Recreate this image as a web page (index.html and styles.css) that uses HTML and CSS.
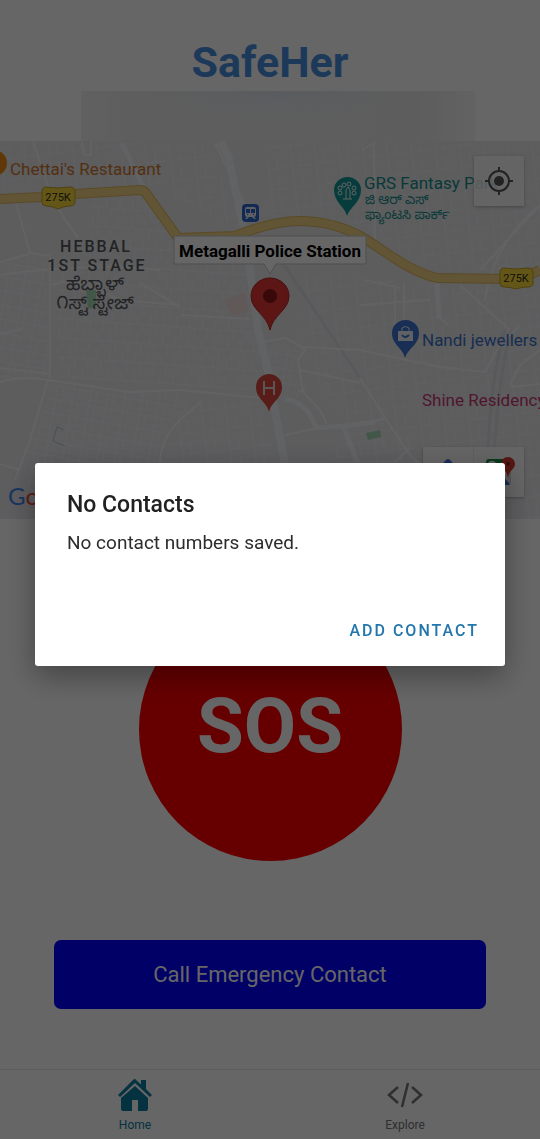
FILE: index.html
```html
<!DOCTYPE html>
<html lang="en">
<head>
<meta charset="utf-8">
<meta name="viewport" content="width=device-width, initial-scale=1">
<title>SafeHer</title>
<link rel="stylesheet" href="styles.css">
</head>
<body>
<div class="app">
  <header class="header">
    <h1 class="brand">SafeHer</h1>
    <div class="location"></div>
  </header>

  <section class="map" aria-label="Map">
    <svg class="map-canvas" viewBox="0 141 540 378" preserveAspectRatio="xMidYMid slice">
      <defs>
        <pattern id="blocks-a" width="13" height="19" patternUnits="userSpaceOnUse" patternTransform="rotate(4)">
          <path class="lane" d="M0 0H13M0 10H13M4 0V10M9 10V19"/>
        </pattern>
        <pattern id="blocks-b" width="17" height="14" patternUnits="userSpaceOnUse" patternTransform="rotate(10)">
          <path class="lane" d="M0 0H17M0 6H17M5 0V14M11 6V14"/>
        </pattern>
        <pattern id="blocks-c" width="24" height="21" patternUnits="userSpaceOnUse" patternTransform="rotate(-7)">
          <path class="lane" d="M0 0H24M6 0V21M15 0V12M6 12H24"/>
        </pattern>
      </defs>
      <rect class="ground" y="141" width="540" height="378"/>
      <path fill="url(#blocks-a)" d="M88 200L140 196L178 240L245 270L262 335L262 390L180 388L60 378L50 260L85 250Z"/>
      <path fill="url(#blocks-b)" d="M0 262L45 255L50 376L0 380Z M52 384L180 394L166 440L150 519H25L32 440Z M262 345L300 350L298 398L270 395Z"/>
      <path fill="url(#blocks-c)" d="M0 143H210L240 230L150 185L0 190Z M270 143H540V270H440L360 230L260 215Z M300 270L430 285L540 290V519H300L345 430L300 350Z M180 400L262 402L275 463H165Z"/>
      <path class="patch-green" d="M86 290H96V307L88 309Z M366 433L380 430L381 437L368 440Z"/>
      <path class="patch-pink" d="M224 300L245 292L248 312L232 316Z"/>
      <path class="patch-line" d="M64 430L57 427L53 441L65 446"/>
      <path class="rail" d="M505 330Q487 385 486 519M512 330Q494 385 492 519M284 265L360 378"/>
      <path class="street" d="M33 141L47 183L57 207L78 238M15 200L30 253L50 256V378M0 262L30 254M82 142L84 155H91V141M50 285L75 280L120 300L180 305M140 283L180 307M0 382C20 376 35 378 48 380L130 392L180 390L262 398M48 380L30 440L15 480M0 464L20 470M0 334L22 329M0 368L50 374M180 420Q160 440 160 463M180 420L202 401M0 275Q90 262 160 270M181 315L250 319M262 342L285 338Q300 345 305 350L298 360L303 392L320 410L327 424M298 392L305 389M300 370L360 383M303 347L360 350L440 367L485 372L500 345L520 325M285 435L317 428M360 378L385 418L410 455L420 465M360 425L386 418M395 462L410 448M510 385L520 365L540 350M510 387L540 384M362 150L374 143L375 240M215 143L245 205M365 280L400 288M438 284L440 318L448 325M480 270L540 205M485 300Q495 240 540 205M395 285V330M404 285V328M360 305L430 300M460 285L510 330"/>
      <path class="road" d="M122 143L143 187M285 399Q300 401 308 412L317 428L343 426L375 422M343 426L358 463M437 283L439 318"/>
      <path class="road-main" d="M220 141L228 155L243 225L250 270L258 330L268 372L273 400L285 465"/>
      <path class="highway-edge" d="M0 199L42 197L75 194L140 190Q145 190 148 196L178 238L235 236C265 224 285 221 300 221C325 221 345 228 360 236C385 250 405 270 437 278L520 279L540 270"/>
      <path class="highway" d="M0 199L42 197L75 194L140 190Q145 190 148 196L178 238L235 236C265 224 285 221 300 221C325 221 345 228 360 236C385 250 405 270 437 278L520 279L540 270"/>

      <g class="shield">
        <path d="M46 187Q58 189 70 187Q75 187 75 192V202Q75 206 70 206Q64 206 58 209Q52 206 46 206Q42 206 42 202V192Q42 187 46 187Z"/>
        <text x="58" y="201">275K</text>
        <path d="M504 268Q516 270 528 268Q533 268 533 273V283Q533 287 528 287Q522 287 516 289Q510 287 504 287Q500 287 500 283V273Q500 268 504 268Z"/>
        <text x="516" y="282">275K</text>
      </g>

      <circle class="food" cx="-6" cy="163" r="13"/>
      <text class="poi poi-food" x="10" y="175">Chettai's Restaurant</text>

      <g class="district">
        <text x="96" y="252">HEBBAL</text>
        <text x="97" y="271">1ST STAGE</text>
        <text class="kannada" x="95" y="290">ಹೆಬ್ಬಾಳ್</text>
        <text class="kannada" x="95" y="309">೧ಸ್ಟ್ ಸ್ಟೇಜ್</text>
      </g>

      <rect class="station" x="242" y="204" width="17" height="18" rx="4"/>
      <path class="station-train" d="M247 207H254Q256 207 256 209V215Q256 217 254 217H247Q245 217 245 215V209Q245 207 247 207ZM247 217L245 219H247L249 217ZM252 217L254 219H256L254 217Z"/>
      <path class="station-window" d="M246 209H250V213H246ZM251 209H255V213H251ZM247 214H248V215H247ZM253 214H254V215H253Z"/>

      <path class="pin-park" d="M347 216C345 207 334 202 334 190A13.500 13 0 0 1 361 190C361 202 350 207 347 216Z"/>
      <g class="pin-line">
        <circle cx="340" cy="193" r="2"/><circle cx="340" cy="188" r="2"/><circle cx="344" cy="185" r="2"/><circle cx="349" cy="184" r="2"/><circle cx="354" cy="188" r="2"/><circle cx="354" cy="193" r="2"/>
        <path d="M343 199H352M346 199V190L348 187L350 190V199"/>
      </g>
      <text class="poi poi-park" x="364" y="189">GRS Fantasy Park</text>
      <text class="poi-small poi-park" x="365" y="204">ಜಿ ಆರ್ ಎಸ್</text>
      <text class="poi-small poi-park" x="365" y="219">ಫ್ಯಾಂಟಸಿ ಪಾರ್ಕ್</text>

      <path class="pin-shop" d="M405 358C403 348 392 345 392 333A13.500 13 0 0 1 419 333C419 345 408 348 405 358Z"/>
      <path class="pin-bag" d="M398 331H413V341H398Z"/>
      <path class="pin-line" d="M402 331V328Q405 325 409 328V331"/>
      <path class="pin-smile" d="M402 335Q405 339 409 335"/>
      <text class="poi poi-shop" x="422" y="346">Nandi jewellers</text>
      <text class="poi poi-hotel" x="422" y="406">Shine Residency</text>

      <path class="pin-hospital" d="M269 412C267 402 256 399 256 387A13 13 0 0 1 282 387C282 399 271 402 269 412Z"/>
      <path class="pin-h" d="M264 381V395M274 381V395M264 388H274"/>

      <path class="pin-main" d="M270 330C267 315 251 310 251 296A19 18 0 0 1 289 296C289 310 273 315 270 330Z"/>
      <circle class="pin-dot" cx="270" cy="296" r="7"/>

      <path class="callout" d="M174 236H366V264H276L270 274L264 264H174Z"/>
      <text class="callout-text" x="270" y="257">Metagalli Police Station</text>

      <text class="logo" x="8" y="505"><tspan class="blue">G</tspan><tspan class="red">o</tspan></text>
    </svg>

    <button class="map-button locate" type="button" aria-label="My location">
      <svg viewBox="0 0 30 30" width="30" height="30" fill="none" stroke="#555" stroke-width="2"><circle cx="15" cy="15" r="10"/><circle cx="15" cy="15" r="5" fill="#555" stroke="none"/><path d="M15 1V6M15 24V29M1 15H6M24 15H29"/></svg>
    </button>
    <div class="map-links">
      <button class="map-button" type="button" aria-label="Directions">
        <svg viewBox="0 0 30 30" width="30" height="30"><path fill="#4272db" d="M13.500 2.500Q15 1.500 16.500 2.500L27.500 13.500Q28.500 15 27.500 16.500L16.500 27.500Q15 28.500 13.500 27.500L2.500 16.500Q1.500 15 2.500 13.500Z"/><path fill="none" stroke="#fff" stroke-width="2" d="M11 19V14H19M16 11L19 14L16 17"/></svg>
      </button>
      <button class="map-button" type="button" aria-label="Open in Maps">
        <svg viewBox="0 0 32 32" width="32" height="32"><path fill="#188c48" d="M3 6Q3 3 6 3H24L16 16L3 27Z"/><path fill="#fff" d="M18 17L25 12V27Z"/><path fill="#3f6cd0" d="M10 28L18 18L27 28Z"/><path fill="#d7d7d7" d="M20 20L28 14V28Z"/><path fill="#3f6cd0" d="M21 22L27 29H21Z"/><path fill="none" stroke="#eee" stroke-width="2" d="M12 7A4 4 0 1 0 13 10H9"/><path fill="#d63a2e" d="M25 22C24 14 18 13 18 8A7 7 0 0 1 32 8C32 13 26 14 25 22Z"/><circle fill="#8b1c16" cx="25" cy="8" r="2"/></svg>
      </button>
    </div>
  </section>

  <main class="actions">
    <button class="sos" type="button">SOS</button>
    <button class="call" type="button">Call Emergency Contact</button>
  </main>

  <nav class="tabs">
    <a class="tab active" href="#home">
      <svg viewBox="0 0 36 34" width="36" height="34" fill="currentColor"><path d="M18 1L24 6.500V2H29V11L35 17L33 19L18 5L3 19L1 17L16 2Q18 0 20 2Z"/><path d="M18 8L31 20V31Q31 33 29 33H21V22H15V33H6Q4 33 4 31V20Z"/></svg>
      <span>Home</span>
    </a>
    <a class="tab" href="#explore">
      <svg viewBox="0 0 36 34" width="36" height="34" fill="none" stroke="currentColor" stroke-width="2.500"><path d="M11 9L2 17L11 25M25 9L34 17L25 25M21 5L15 29"/></svg>
      <span>Explore</span>
    </a>
  </nav>
</div>

<div class="scrim">
  <section class="dialog" role="alertdialog" aria-modal="true" aria-labelledby="dialog-title" aria-describedby="dialog-text">
    <h2 class="dialog-title" id="dialog-title">No Contacts</h2>
    <p class="dialog-text" id="dialog-text">No contact numbers saved.</p>
    <div class="dialog-actions"><button class="dialog-button" type="button">Add Contact</button></div>
  </section>
</div>
</body>
</html>
```
FILE: styles.css
```css
* { box-sizing: border-box; }
body {
  margin: 0;
  background: #fff;
  font-family: Roboto, "Noto Sans Kannada", "Noto Sans", sans-serif;
}
button { border: 0; padding: 0; font-family: inherit; cursor: pointer; }

.app { display: flex; flex-direction: column; min-height: 100vh; }

.header { display: flex; flex-direction: column; padding-top: 34px; }
.brand { margin: 0; text-align: center; font-size: 43px; line-height: 57px; font-weight: 700; color: #4a90e2; }
.location {
  width: 73%;
  height: 50px;
  margin-left: 15%;
  background:
    radial-gradient(ellipse at 50% 0, rgba(215, 226, 238, .6), transparent 45%),
    linear-gradient(90deg, #f2f2f2, #eaeaea 15%, #ececec 50%, #e8e8e8 85%, #f6f6f6);
}

.map { position: relative; height: 378px; overflow: hidden; }
.map-canvas { display: block; width: 100%; height: 100%; }
.ground { fill: #e8e8ec; }
.lane { fill: none; stroke: #f1f2f5; stroke-width: 1; }
.street { fill: none; stroke: #f5f6f8; stroke-width: 2; }
.road { fill: none; stroke: #f3f4f7; stroke-width: 5; }
.road-main { fill: none; stroke: #f3f4f7; stroke-width: 8; }
.rail { fill: none; stroke: #dddfe3; stroke-width: 3; }
.highway-edge { fill: none; stroke: #dfb95e; stroke-width: 10; }
.highway { fill: none; stroke: #f5d585; stroke-width: 8; }
.patch-green { fill: #a9d9b4; }
.patch-pink { fill: #efdfdd; }
.patch-line { fill: none; stroke: #b5c4ce; stroke-width: 1; }

.shield path { fill: #f7d73a; stroke: #c2a32a; stroke-width: 1; }
.shield text { font-size: 11px; fill: #2d2d18; text-anchor: middle; }
.poi { font-size: 17px; }
.poi-small { font-size: 13px; }
.poi-food { fill: #d0762c; }
.poi-park { fill: #14908d; }
.poi-shop { fill: #3a72c8; }
.poi-hotel { fill: #c83870; }
.food { fill: #f08c14; }
.district text { font-size: 16px; letter-spacing: 2px; fill: #55585c; text-anchor: middle; font-weight: 500; }
.district .kannada { font-size: 18px; letter-spacing: 0; font-weight: 400; }
.station { fill: #2c68cf; }
.station-train { fill: #e7eefa; }
.station-window { fill: #2c68cf; }
.pin-park { fill: #109896; }
.pin-shop { fill: #3d73d4; }
.pin-line { fill: none; stroke: #eef6f6; stroke-width: 1; }
.pin-bag { fill: #eef3fb; }
.pin-smile { fill: none; stroke: #3d73d4; stroke-width: 2; }
.pin-hospital { fill: #dd4a40; }
.pin-h { fill: none; stroke: #e8d4d4; stroke-width: 2; }
.pin-main { fill: #e53935; stroke: #b82622; stroke-width: 1; }
.pin-dot { fill: #8e1616; }
.callout { fill: #fff; stroke: #c4c4c4; stroke-width: 1; }
.callout-text { font-size: 17px; font-weight: 700; fill: #000; text-anchor: middle; }
.logo { font-family: Lato, sans-serif; font-size: 24px; }
.blue { fill: #4285f4; }
.red { fill: #ea4335; }

.map-button { display: grid; place-items: center; width: 50px; height: 50px; background: rgba(255, 255, 255, .8); }
.locate { position: absolute; top: 15px; right: 16px; box-shadow: 0 1px 3px #aaa; }
.map-links { position: absolute; right: 16px; bottom: 22px; display: flex; gap: 1px; box-shadow: 0 1px 3px #aaa; }

.actions { flex: 1; display: flex; flex-direction: column; align-items: center; gap: 79px; padding: 79px 10% 60px; }
.sos {
  width: 263px;
  height: 263px;
  padding-bottom: 8px;
  border-radius: 50%;
  background: #f00;
  color: #fff;
  font-size: 76px;
  font-weight: 700;
}
.call { width: 100%; height: 69px; border-radius: 7px; background: #00f; color: #fff; font-size: 22px; }

.tabs { display: flex; height: 71px; border-top: 1px solid #e6e6e6; }
.tab {
  flex: 1;
  display: flex;
  flex-direction: column;
  align-items: center;
  gap: 5px;
  padding-top: 8px;
  color: #757575;
  font-size: 12px;
  line-height: 16px;
  text-decoration: none;
}
.tab.active { color: #0a7ea4; }

.scrim {
  position: fixed;
  inset: 0;
  display: grid;
  align-items: center;
  padding: 0 35px 10px;
  background: rgba(0, 0, 0, .6);
}
.dialog {
  padding: 28px 20px 16px 32px;
  border-radius: 3px;
  background: #fff;
  box-shadow: 0 10px 30px rgba(0, 0, 0, .35);
}
.dialog-title { margin: 0; font-size: 23px; line-height: 28px; font-weight: 500; color: #212121; }
.dialog-text { margin: 12px 0 56px; font-size: 19px; line-height: 24px; color: #2c2c2c; }
.dialog-actions { display: flex; justify-content: flex-end; }
.dialog-button {
  padding: 0 6px;
  background: none;
  color: #2176ae;
  font-size: 16px;
  line-height: 39px;
  font-weight: 500;
  letter-spacing: 2px;
  text-transform: uppercase;
}
```
